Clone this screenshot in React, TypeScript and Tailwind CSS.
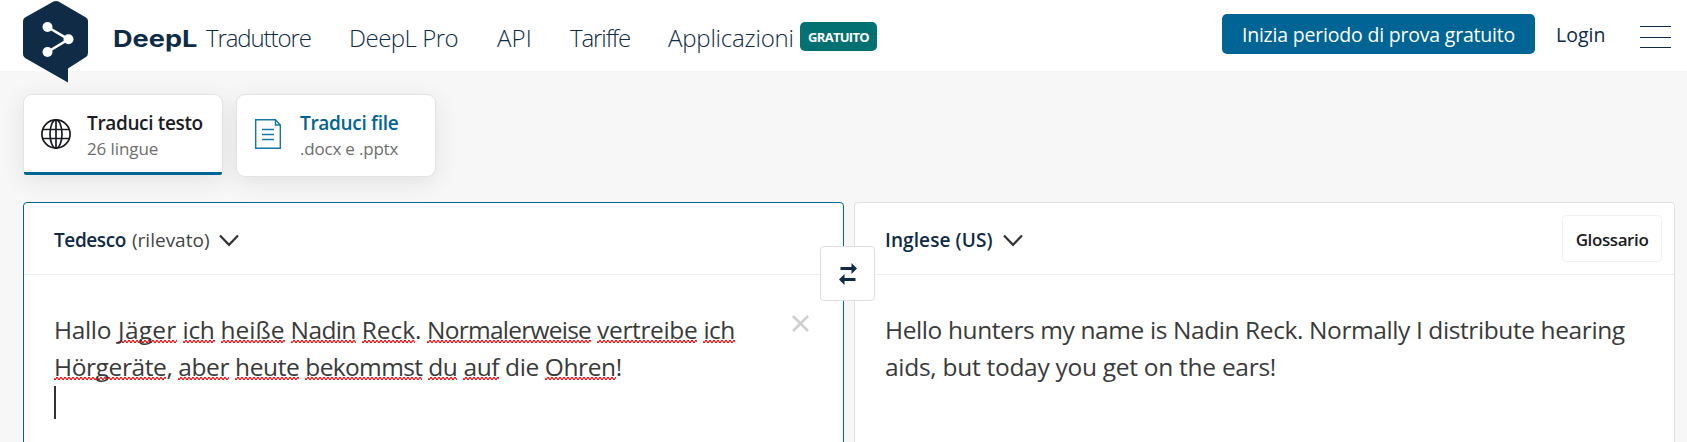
import type { ReactNode } from "react";

function Logo() {
  return (
    <svg width="66" height="83" viewBox="0 0 66 83" className="block">
      <path
        d="M2 17.5 30.5 1.6Q33 .2 35.500 1.600L63 17.500Q65 18.800 65 21V53Q65 56 62.500 57.300L45 68.500V82.500L2 58Q0 56.600 0 54V21.500Q0 18.700 2 17.500Z"
        fill="#0f2b46"
      />
      <path d="M24.500 27 45.500 39.300 24.500 52" fill="none" stroke="#fff" strokeWidth="2.600" />
      <circle cx="24.500" cy="27" r="5" fill="#fff" />
      <circle cx="45.500" cy="39.300" r="5" fill="#fff" />
      <circle cx="24.500" cy="52" r="5" fill="#fff" />
    </svg>
  );
}

function Globe() {
  return (
    <svg width="30" height="30" viewBox="0 0 30 30" fill="none" stroke="#1b1c22" strokeWidth="1.700">
      <circle cx="15" cy="15" r="14.100" />
      <ellipse cx="15" cy="15" rx="6" ry="14.100" />
      <path d="M15 1v28M2 10.500h26M2 19.500h26" />
    </svg>
  );
}

function FileIcon() {
  return (
    <svg width="26" height="30" viewBox="0 0 26 30" fill="none" stroke="#1577a3" strokeWidth="1.400">
      <path d="M.7.700H20.500L25.300 6V29.300H.7ZM20.500.700V6H25.300M7 10.500H19M7 15.500H19M7 20.500H19" />
    </svg>
  );
}

function Chevron() {
  return (
    <svg width="20" height="13" viewBox="0 0 20 13" fill="none" stroke="#333" strokeWidth="2.200">
      <path d="M1 1.500 10 10.800 19 1.500" />
    </svg>
  );
}

function SwapIcon() {
  return (
    <svg width="18" height="22" viewBox="0 0 18 22" fill="#0f2b46">
      <path d="M1.500 4H12.500V0L18 5.500 12.500 11V7H1.500ZM16.500 15V18H5.500V22L0 16.500 5.500 11V15Z" />
    </svg>
  );
}

function Sp({ children, className = "" }: { children: ReactNode; className?: string }) {
  return (
    <span
      className={`bg-[linear-gradient(90deg,#f11_50%,transparent_50%),linear-gradient(90deg,#f55,#f55),linear-gradient(90deg,transparent_50%,#f11_50%)] bg-[length:4px_1px,4px_1px,4px_1px] bg-[position:0_calc(100%-3px),0_calc(100%-4px),0_calc(100%-5px)] bg-repeat-x ${className}`}
    >
      {children}
    </span>
  );
}

export default function App() {
  return (
    <div className="h-[442px] w-[1687px] overflow-hidden bg-[#f7f7f7] font-['Open_Sans',sans-serif] whitespace-nowrap text-[#0f2b46]">
      <header className="flex h-[71px] bg-white pl-[23px]">
        <div className="relative z-10 w-[66px] shrink-0">
          <Logo />
        </div>
        <nav className="flex h-[71px] shrink-0 items-start pt-[20px] text-[24px] leading-[36px] font-light">
          <span className="ml-[24px] w-[93px] shrink-0">
            <span className="inline-block origin-left scale-x-[1.18] font-['Inter',sans-serif] text-[23px] font-bold">
              DeepL
            </span>
          </span>
          <span className="w-[143px] tracking-[-1.1px]">Traduttore</span>
          <span className="w-[148px] tracking-[-0.5px]">DeepL Pro</span>
          <span className="w-[73px] tracking-[0.2px]">API</span>
          <span className="w-[98px] tracking-[-1.1px]">Tariffe</span>
          <span className="w-[132px] tracking-[-0.2px]">Applicazioni</span>
          <span className="mt-[2px] flex h-[29px] w-[77px] items-center justify-center rounded-[5px] bg-[#037171] pt-[2px] text-[13px] leading-none font-bold tracking-[-0.7px] text-white">
            GRATUITO
          </span>
        </nav>
        <div className="ml-auto flex shrink-0">
          <button className="mt-[14px] h-[40px] w-[313px] rounded-[5px] bg-[#006494] text-[19.5px] leading-[42px] tracking-[-0.2px] text-white">
            Inizia periodo di prova gratuito
          </button>
          <span className="mt-[14px] ml-[21px] w-[84px] text-[19.5px] leading-[42px]">Login</span>
          <svg width="31" height="24" viewBox="0 0 31 24" className="mt-[25px] mr-[16px]" stroke="#0f2b46">
            <path d="M0 1.500H31M0 12.500H31M0 22.500H31" />
          </svg>
        </div>
      </header>

      <div className="flex gap-[13px] pt-[23px] pl-[23px]">
        <div className="flex h-[81px] w-[200px] flex-col rounded-t-[9px] rounded-b-[5px] border border-b-0 border-[#e3e3e3] bg-white shadow-[0_5px_25px_rgba(0,0,0,0.09)]">
          <div className="flex grow">
            <div className="mt-[24px] ml-[17px] w-[46px]">
              <Globe />
            </div>
            <div className="mt-[14px]">
              <div className="text-[19px] leading-[28px] font-semibold tracking-[-0.35px] text-[#1b1c22]">
                Traduci testo
              </div>
              <div className="text-[17px] leading-[24px] tracking-[-0.1px] text-[#6e6e6e]">26 lingue</div>
            </div>
          </div>
          <div className="h-[3px] rounded-b-[2px] bg-[#006494]" />
        </div>
        <div className="flex h-[83px] w-[200px] rounded-[9px] border border-[#e3e3e3] bg-white shadow-[0_5px_25px_rgba(0,0,0,0.09)]">
          <div className="mt-[24px] ml-[18px] w-[45px]">
            <FileIcon />
          </div>
          <div className="mt-[14px]">
            <div className="text-[19px] leading-[28px] font-semibold tracking-[-0.3px] text-[#006494]">Traduci file</div>
            <div className="text-[17px] leading-[24px] tracking-[-0.2px] text-[#6e6e6e]">.docx e .pptx</div>
          </div>
        </div>
      </div>

      <main className="relative mt-[25px] ml-[23px] flex gap-[10px]">
        <section className="h-[260px] w-[821px] rounded-[4px] border border-[#006494] bg-white">
          <div className="flex h-[72px] items-center border-b border-[#ececec] pt-[4px] pl-[30px]">
            <span className="w-[78px] text-[19px] font-semibold tracking-[-0.4px]">Tedesco</span>
            <span className="w-[87px] text-[19px] text-[#444]">(rilevato)</span>
            <Chevron />
          </div>
          <div className="flex">
            <div className="mt-[36px] ml-[30px] w-[738px] text-[24.5px] leading-[37px] text-[#3a3a3a]">
              <div className="tracking-[-0.35px]">
                Hallo <Sp className="ml-[1px] tracking-[0.25px]">Jäger</Sp> <Sp>ich</Sp>{" "}
                <Sp className="tracking-[0px]">heiße</Sp> <Sp className="tracking-[-0.6px]">Nadin</Sp>{" "}
                <Sp className="tracking-[-0.1px]">Reck</Sp>. <Sp className="tracking-[-0.75px]">Normalerweise</Sp>{" "}
                <Sp>vertreibe</Sp> <Sp className="tracking-[-0.6px]">ich</Sp>
              </div>
              <div className="tracking-[-0.4px]">
                <Sp>Hörgeräte</Sp>, <Sp>aber</Sp> <Sp>heute</Sp> <Sp className="tracking-[-0.65px]">bekommst</Sp>{" "}
                <Sp>du</Sp> <Sp>auf</Sp> die <Sp>Ohren</Sp>!
              </div>
              <div className="mt-[1px] h-[33px] w-[2px] bg-[#333]" />
            </div>
            <svg width="17" height="17" viewBox="0 0 17 17" className="mt-[40px]" stroke="#cfcfcf" strokeWidth="2.600">
              <path d="M1 1 16 16M16 1 1 16" />
            </svg>
          </div>
        </section>
        <section className="h-[260px] w-[821px] rounded-[4px] border border-[#e0e0e0] bg-white">
          <div className="flex h-[72px] items-center border-b border-[#ececec] pl-[30px]">
            <span className="w-[118px] pt-[4px] text-[19px] font-semibold tracking-[0.1px]">Inglese (US)</span>
            <span className="pt-[4px]">
              <Chevron />
            </span>
            <span className="mr-[12px] ml-auto flex h-[47px] w-[100px] items-center justify-center rounded-[4px] border border-[#f0f0f0] pt-[2px] text-[17px] font-semibold tracking-[-0.4px] text-[#1b1c22]">
              Glossario
            </span>
          </div>
          <div className="mt-[36px] ml-[30px] text-[24.5px] leading-[37px] text-[#3a3a3a]">
            <div className="tracking-[-0.4px]">Hello hunters my name is Nadin Reck. Normally I distribute hearing</div>
            <div className="tracking-[-0.28px]">aids, but today you get on the ears!</div>
          </div>
        </section>
        <button className="absolute top-[44px] left-[797px] flex h-[55px] w-[55px] items-center justify-center rounded-[4px] border border-[#dedede] bg-white">
          <SwapIcon />
        </button>
      </main>
    </div>
  );
}
